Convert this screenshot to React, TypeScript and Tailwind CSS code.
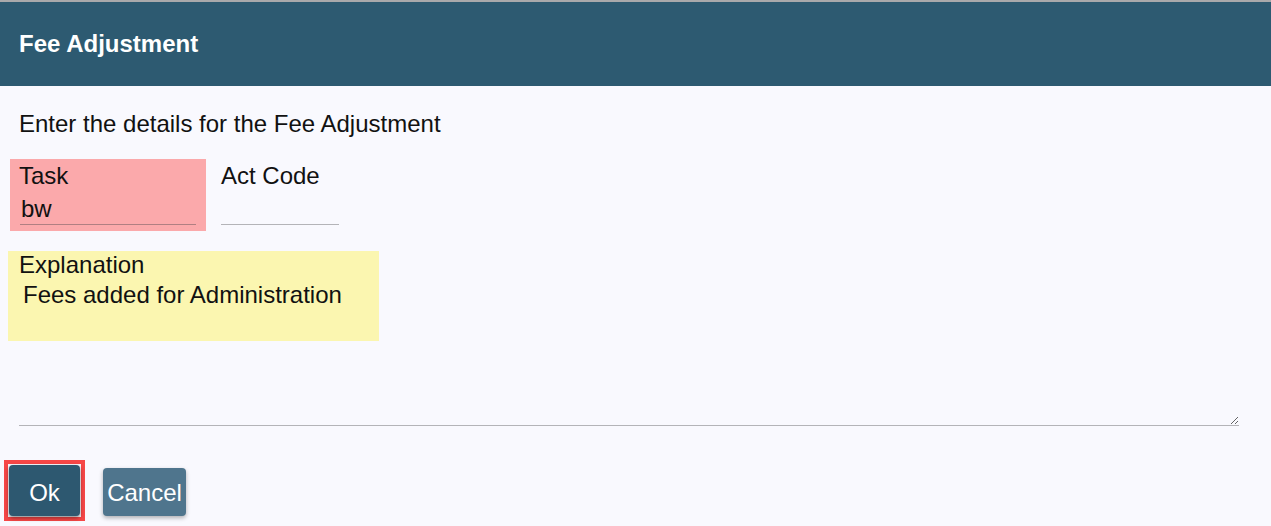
import { useState } from "react";

export default function App() {
  const [task, setTask] = useState("bw");
  const [actCode, setActCode] = useState("");
  const [explanation, setExplanation] = useState("Fees added for Administration");

  return (
    <div
      className="h-[526px] w-full overflow-hidden bg-[#f9f9fe] text-[#111]"
      style={{ fontFamily: '"Liberation Sans", Arial, sans-serif' }}
    >
      <div className="h-[2px] bg-[#a9a9ab]" />
      <div className="flex h-[84px] items-center bg-[#2d5a71] pl-[19px] text-[24px] font-bold leading-[28px] text-white">
        Fee Adjustment
      </div>

      <div className="pt-[24px]">
        <p className="pl-[19px] text-[24px] leading-[28px]">
          Enter the details for the Fee Adjustment
        </p>

        {/* task + act code row */}
        <div className="mt-[21px] flex items-start pl-[10px]">
          <div className="flex h-[72px] w-[196px] flex-col bg-[#fba9ab] px-[10px] pt-[3px]">
            <label className="ml-[-1px] text-[24px] leading-[28px]">Task</label>
            <input
              value={task}
              onChange={(e) => setTask(e.target.value)}
              className="mt-[4px] h-[31px] w-[176px] border-0 border-b border-[#b07f82] bg-transparent pl-[1px] text-[24px] leading-[28px] outline-none"
            />
          </div>
          <div className="ml-[15px] flex h-[72px] flex-col pt-[3px]">
            <label className="text-[24px] leading-[28px]">Act Code</label>
            <input
              value={actCode}
              onChange={(e) => setActCode(e.target.value)}
              className="mt-[4px] h-[31px] w-[118px] border-0 border-b border-[#b4b4b8] bg-transparent text-[24px] leading-[28px] outline-none"
            />
          </div>
        </div>

        {/* explanation */}
        <div className="ml-[8px] mt-[20px] h-[90px] w-[371px] bg-[#fbf6b0] pl-[11px]">
          <label className="block text-[24px] leading-[28px]">Explanation</label>
          <textarea
            value={explanation}
            onChange={(e) => setExplanation(e.target.value)}
            className="block h-[147px] w-[1220px] border-0 border-b border-[#b4b4b8] bg-transparent pl-[4px] pt-[2px] text-[24px] leading-[28px] outline-none"
          />
        </div>

        {/* buttons */}
        <div className="mt-[119px] flex items-start pl-[4px]">
          <div className="border-4 border-[#f64747] p-[1px]">
            <button className="flex h-[51px] w-[71px] items-center justify-center rounded-[4px] bg-[#2d5870] pt-[5px] text-[24px] text-white shadow-[0_2px_4px_rgba(0,0,0,0.45)]">
              Ok
            </button>
          </div>
          <button className="ml-[18px] mt-[8px] flex h-[48px] w-[83px] items-center justify-center rounded-[4px] bg-[#4f758d] pt-[1px] text-[24px] text-white shadow-[0_2px_4px_rgba(0,0,0,0.3)]">
            Cancel
          </button>
        </div>
      </div>
    </div>
  );
}
